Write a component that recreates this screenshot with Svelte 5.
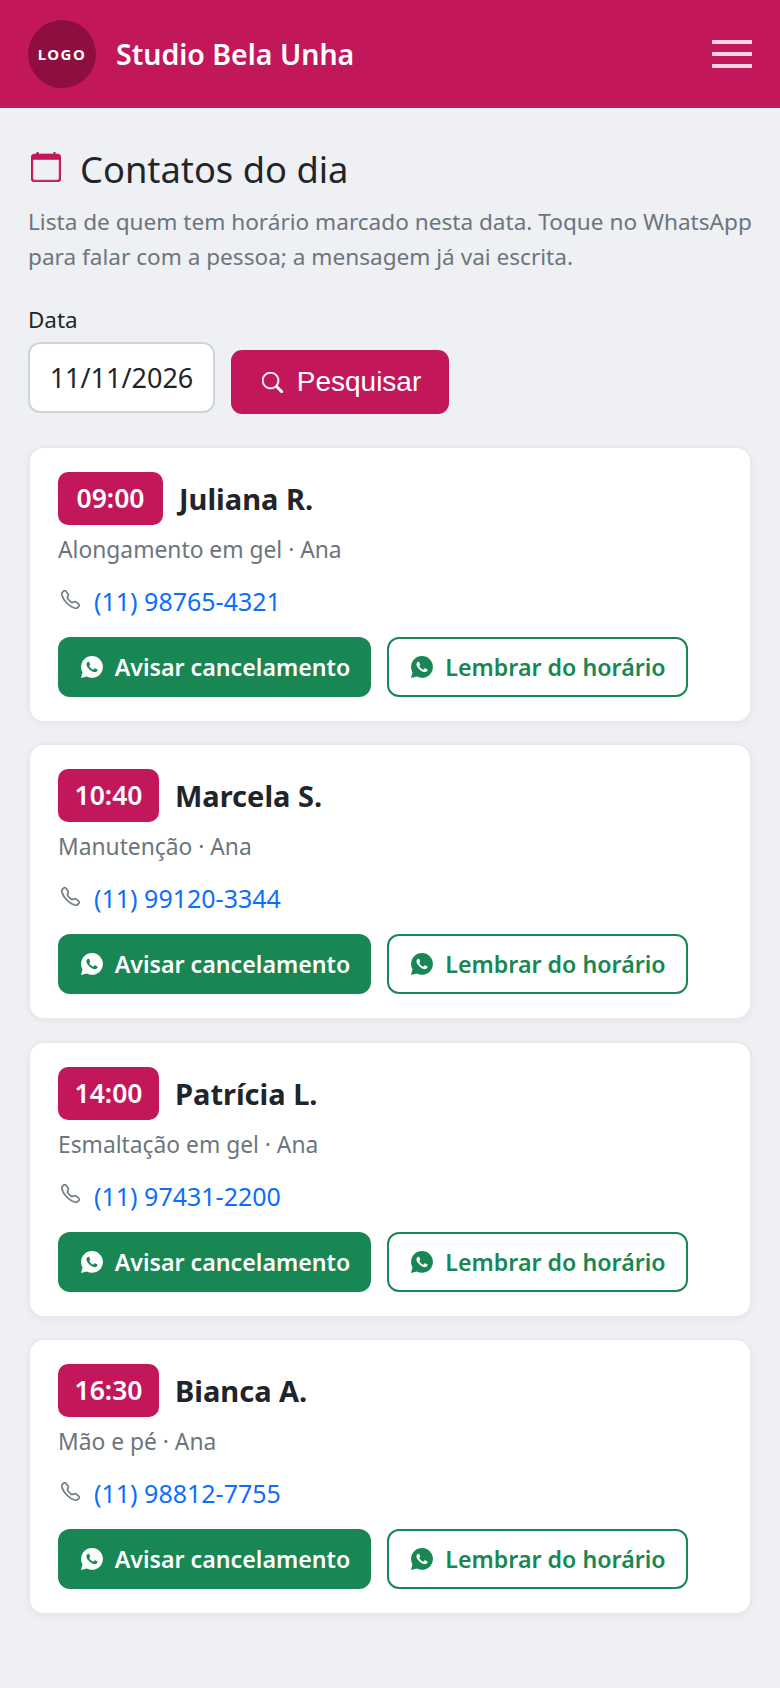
<script>
  const contatos = [
    { hora: "09:00", largura: 105, nome: "Juliana R.", servico: "Alongamento em gel · Ana", fone: "(11) 98765-4321" },
    { hora: "10:40", largura: 101, nome: "Marcela S.", servico: "Manutenção · Ana", fone: "(11) 99120-3344" },
    { hora: "14:00", largura: 101, nome: "Patrícia L.", servico: "Esmaltação em gel · Ana", fone: "(11) 97431-2200" },
    { hora: "16:30", largura: 101, nome: "Bianca A.", servico: "Mão e pé · Ana", fone: "(11) 98812-7755" }
  ];
</script>

{#snippet whats()}
  <svg class="wa" viewBox="0 0 16 16" fill="currentColor" fill-rule="evenodd">
    <path d="M13.601 2.326A7.854 7.854 0 0 0 7.994 0C3.627 0 .068 3.558.064 7.926c0 1.399.366 2.76 1.057 3.965L0 16l4.204-1.102a7.933 7.933 0 0 0 3.79.965h.004c4.368 0 7.926-3.558 7.93-7.93A7.898 7.898 0 0 0 13.6 2.326zM11.609 9.587c-.197-.099-1.17-.578-1.353-.646-.182-.065-.315-.099-.445.099-.133.197-.513.646-.627.775-.114.133-.232.148-.43.05-.197-.1-.836-.308-1.592-.985-.59-.525-.985-1.175-1.103-1.372-.114-.198-.011-.304.088-.403.087-.088.197-.232.296-.346.1-.114.133-.198.198-.33.065-.134.034-.248-.015-.347-.05-.099-.445-1.076-.612-1.47-.16-.389-.323-.335-.445-.34-.114-.007-.247-.007-.38-.007a.729.729 0 0 0-.529.247c-.182.198-.691.677-.691 1.654 0 .977.71 1.916.81 2.049.098.133 1.394 2.132 3.383 2.992.47.205.84.326 1.129.418.475.152.904.129 1.246.08.38-.058 1.171-.48 1.338-.943.164-.464.164-.86.114-.943-.049-.084-.182-.133-.38-.232z"/>
  </svg>
{/snippet}

<header class="topo">
  <div class="marca">
    <div class="logo">LOGO</div>
    <span class="nome-studio">Studio Bela Unha</span>
  </div>
  <div class="burger"><i></i><i></i><i></i></div>
</header>

<main>
  <h1>
    <svg class="cal" viewBox="0 0 16 16" fill="currentColor" stroke="currentColor" stroke-width="0.3">
      <path d="M3.5 0a.5.5 0 0 1 .5.5V1h8V.5a.5.5 0 0 1 1 0V1h1a2 2 0 0 1 2 2v11a2 2 0 0 1-2 2H2a2 2 0 0 1-2-2V3a2 2 0 0 1 2-2h1V.5a.5.5 0 0 1 .5-.5zM1 4v10a1 1 0 0 0 1 1h12a1 1 0 0 0 1-1V4H1z"/>
    </svg>
    Contatos do dia
  </h1>
  <p class="intro">Lista de quem tem horário marcado nesta data. Toque no WhatsApp para falar com a pessoa; a mensagem já vai escrita.</p>

  <div class="filtro">
    <div>
      <div class="rotulo">Data</div>
      <div class="data">11/11/2026</div>
    </div>
    <button class="pesquisar">
      <svg viewBox="0 0 16 16" fill="currentColor" stroke="currentColor" stroke-width="0.4"><path d="M11.742 10.344a6.5 6.5 0 1 0-1.397 1.398h-.001c.03.04.062.078.098.115l3.85 3.85a1 1 0 0 0 1.415-1.414l-3.85-3.85a1.007 1.007 0 0 0-.115-.1zM12 6.5a5.5 5.5 0 1 1-11 0 5.5 5.5 0 0 1 11 0z"/></svg>
      Pesquisar
    </button>
  </div>

  {#each contatos as c}
    <section class="card">
      <div class="linha-nome">
        <span class="hora" style="width: {c.largura}px">{c.hora}</span>
        <strong>{c.nome}</strong>
      </div>
      <div class="servico">{c.servico}</div>
      <div class="fone">
        <svg viewBox="0 0 16 16" fill="currentColor" stroke="currentColor" stroke-width="0.35"><path d="M3.654 1.328a.678.678 0 0 0-1.015-.063L1.605 2.3c-.483.484-.661 1.169-.45 1.77a17.568 17.568 0 0 0 4.168 6.608 17.569 17.569 0 0 0 6.608 4.168c.601.211 1.286.033 1.77-.45l1.034-1.034a.678.678 0 0 0-.063-1.015l-2.307-1.794a.678.678 0 0 0-.58-.122l-2.19.547a1.745 1.745 0 0 1-1.657-.459L5.482 8.062a1.745 1.745 0 0 1-.46-1.657l.548-2.19a.678.678 0 0 0-.122-.58L3.654 1.328zM1.884.511a1.745 1.745 0 0 1 2.612.163L6.29 2.98c.329.423.445.974.315 1.494l-.547 2.19a.678.678 0 0 0 .178.643l2.457 2.457a.678.678 0 0 0 .644.178l2.189-.547a1.745 1.745 0 0 1 1.494.315l2.306 1.794c.829.645.905 1.87.163 2.611l-1.034 1.034c-.74.74-1.846 1.065-2.877.702a18.634 18.634 0 0 1-7.01-4.42 18.634 18.634 0 0 1-4.42-7.009c-.362-1.03-.037-2.137.703-2.877L1.885.511z"/></svg>
        <a href="#fone">{c.fone}</a>
      </div>
      <div class="acoes">
        <button class="verde">{@render whats()}Avisar cancelamento</button>
        <button class="contorno">{@render whats()}Lembrar do horário</button>
      </div>
    </section>
  {/each}
</main>

<style>
  :global(body) {
    background: #eef0f4;
    font-family: "Noto Sans", "Open Sans", sans-serif;
    color: #212529;
  }

  .topo {
    height: 108px;
    background: #c2185b;
    display: flex;
    align-items: center;
    justify-content: space-between;
    padding: 0 28px;
  }
  .marca {
    display: flex;
    align-items: center;
    gap: 20px;
  }
  .logo {
    width: 68px;
    height: 68px;
    border-radius: 50%;
    background: #8e0f3f;
    color: #fff;
    font-size: 15px;
    font-weight: 700;
    letter-spacing: 1.5px;
    display: flex;
    align-items: center;
    justify-content: center;
  }
  .nome-studio {
    color: #fff;
    font-size: 28.5px;
    font-weight: 600;
  }
  .burger {
    width: 40px;
    display: flex;
    flex-direction: column;
    gap: 8px;
  }
  .burger i {
    display: block;
    height: 4px;
    background: #f8d5e3;
  }

  main {
    padding: 35px 28px 0;
  }
  h1 {
    margin: 0 0 9px;
    font-size: 36.3px;
    font-weight: 400;
    line-height: 52px;
    display: flex;
    align-items: center;
    gap: 19px;
  }
  .cal {
    width: 30px;
    height: 30px;
    color: #c2185b;
    margin-left: 3px;
    margin-top: -4px;
  }
  .intro {
    margin: 0 0 29px;
    font-size: 22.6px;
    line-height: 35px;
    color: #6c757d;
  }

  .filtro {
    display: flex;
    align-items: flex-end;
    gap: 16px;
    margin-bottom: 33px;
  }
  .rotulo {
    font-size: 22.4px;
    line-height: 34px;
    margin-bottom: 5px;
  }
  .data {
    width: 187px;
    height: 71px;
    box-sizing: border-box;
    background: #fff;
    border: 2px solid #ced4da;
    border-radius: 12px;
    font-size: 27px;
    display: flex;
    align-items: center;
    justify-content: center;
  }
  .pesquisar {
    width: 218px;
    height: 64px;
    background: #c2185b;
    color: #fff;
    border: 0;
    border-radius: 11px;
    font-family: "Liberation Sans", sans-serif;
    font-size: 28px;
    display: flex;
    align-items: center;
    justify-content: center;
    gap: 14px;
    padding: 0 0 0 3px;
    margin-bottom: -1px;
  }
  .pesquisar svg {
    width: 21px;
    height: 21px;
  }

  .card {
    background: #fff;
    border: 2px solid #e8e9ed;
    border-radius: 16px;
    box-shadow: 0 2px 6px rgba(0, 0, 0, 0.04);
    padding: 24px 28px;
    margin-bottom: 20.4px;
  }
  .linha-nome {
    display: flex;
    align-items: center;
    gap: 16px;
  }
  .hora {
    background: #c2185b;
    color: #fff;
    border-radius: 10px;
    height: 53px;
    line-height: 53px;
    text-align: center;
    font-size: 26.5px;
    font-weight: 600;
  }
  strong {
    font-size: 29px;
    font-weight: 700;
  }
  .servico {
    color: #6c757d;
    font-size: 22.8px;
    line-height: 36px;
    margin-top: 7px;
  }
  .fone {
    display: flex;
    align-items: center;
    gap: 14px;
    margin-top: 15px;
    line-height: 36px;
  }
  .fone svg {
    width: 19px;
    height: 19px;
    color: #6c757d;
    margin-left: 3px;
    margin-top: -4px;
  }
  .fone a {
    color: #0d6efd;
    font-size: 25px;
    text-decoration: none;
  }
  .acoes {
    display: flex;
    gap: 16px;
    margin-top: 18px;
  }
  .acoes button {
    height: 60px;
    box-sizing: border-box;
    border-radius: 12px;
    font-family: inherit;
    font-size: 23.2px;
    font-weight: 600;
    display: flex;
    align-items: center;
    justify-content: center;
    gap: 12px;
    padding: 0 0 0 2px;
  }
  .verde {
    width: 313px;
    background: #198754;
    color: #fff;
    border: 0;
  }
  .contorno {
    width: 301px;
    background: #fff;
    color: #198754;
    border: 2px solid #198754;
  }
  .wa {
    width: 22px;
    height: 22px;
  }
</style>
